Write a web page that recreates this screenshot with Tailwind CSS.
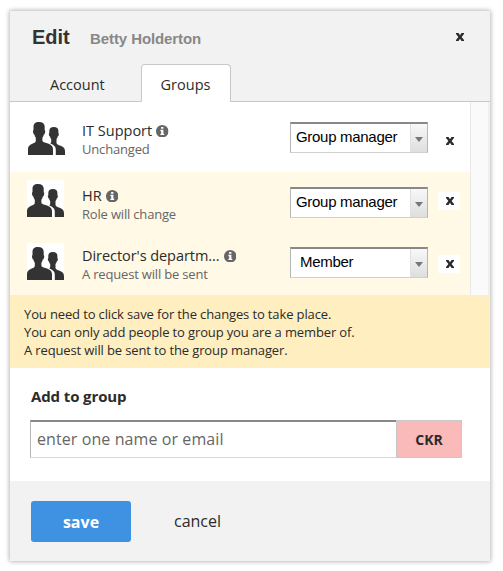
<!DOCTYPE html>
<html lang="en">
<head>
<meta charset="utf-8">
<title>Edit groups</title>
<script src="https://cdn.jsdelivr.net/npm/@tailwindcss/browser@4"></script>
</head>
<body class="bg-white w-[503px] h-[571px] overflow-hidden pl-[10px] pt-[11px] font-['Open_Sans',sans-serif] text-[#2b2b2b]">
<svg class="hidden">
  <symbol id="people" viewBox="0 0 37 37">
    <path fill="#333" d="M11 4C7.200 4 5.500 5.700 5.500 8.800v3.400c-.6.200-.7 1-.3 2.500.3 1.200.6 1.700 1.200 1.800.2 1.300.6 2.300 1.400 3.300v3c0 1.500-1.300 2-3 2.800C2 27 0 28 0 31.500V37h25v-5.500c0-3.500-2-4.500-5-5.900-1.700-.8-5.600-1.600-5.600-2.900v-2.900c.8-1 1.200-2 1.400-3.300.6-.1.900-.6 1.200-1.800.4-1.500.3-2.300-.3-2.500V8.800C16.700 5.700 14.800 4 11 4z"/>
    <path fill="#333" d="M25.800 9c-3 0-4.500 1.500-4.500 4v2.200c-.5.200-.6.800-.3 1.800.2 1 .5 1.400 1 1.500.2 1.100.6 2 1.200 2.600V24c0 .6-.4 1-1 1.400 3.600 1.500 5.600 2.800 5.600 6.100V37H37v-3.800c0-3-1.500-4.200-4.300-5.400-2.500-1-4.200-1.600-4.200-2.900v-3.800c.6-.6 1-1.500 1.200-2.600.5-.1.800-.5 1-1.500.3-1 .2-1.600-.3-1.800V13c0-2.500-1.600-4-4.600-4z"/>
  </symbol>
  <symbol id="info" viewBox="0 0 12 12">
    <circle cx="6" cy="6" r="6" fill="#666"/>
    <path fill="#fff" d="M4.900 1.800h2.200v1.700H4.900zM4.200 4.600h2.900v3.800h.8v1.300H4.200V8.400h.8V5.900h-.8z"/>
  </symbol>
  <symbol id="close" viewBox="0 0 8 8">
    <path fill="#2b2b2b" d="M0 0h2.500L4 2.200 5.500 0H8v1L5.600 4 8 7v1H5.500L4 5.800 2.500 8H0V7l2.400-3L0 1z"/>
  </symbol>
</svg>
<main class="w-[480px] h-[550px] flex flex-col bg-white rounded-[2px] shadow-[0_0_4px_1px_rgba(0,0,0,0.28)]">
  <header class="h-[91px] shrink-0 bg-[#f2f2f2] flex flex-col justify-between rounded-t-[2px]">
    <div class="h-[53px] flex pl-[22px] pr-[26px] pt-[14px] font-['Liberation_Sans',sans-serif] font-bold">
      <h1 class="w-[58px] text-[20px] leading-[24px] text-[#333]">Edit</h1>
      <span class="text-[15px] leading-[28px] text-[#888] grow whitespace-nowrap tracking-[-0.09px]">Betty Holderton</span>
      <button class="mt-[8px] size-[8px]" aria-label="Close"><svg class="size-[8px] block"><use href="#close"/></svg></button>
    </div>
    <nav class="h-[38px] flex text-[14.500px] leading-[20px]">
      <a class="w-[131px] pl-[40px] pt-[11px] border-b border-[#c8c8c8]">Account</a>
      <a class="w-[90px] pt-[10px] pr-px text-center border border-b-0 border-[#c8c8c8] rounded-t-[4px] bg-white">Groups</a>
      <span class="grow border-b border-[#c8c8c8]"></span>
    </nav>
  </header>
  <section class="h-[193px] shrink-0 flex">
    <ul class="w-[460px]">
      <li class="h-[70px] flex items-start">
        <svg class="ml-[18px] mt-[16px] size-[37px] shrink-0"><use href="#people"/></svg>
        <div class="ml-[17px] mt-[19px] w-[208px]">
          <div class="flex items-center h-[20px] gap-[4px] text-[14.500px] whitespace-nowrap">IT Support<svg class="size-[12.500px]"><use href="#info"/></svg></div>
          <p class="-mt-px text-[13px] leading-[18px] tracking-[-0.18px] text-[#666]">Unchanged</p>
        </div>
        <div class="mt-[20px] w-[138px] h-[31px] flex bg-white border-t-2 border-t-[#888] border-x border-x-[#b5b5b5] border-b border-b-[#d0d0d0] font-['Liberation_Sans',sans-serif] text-[15px] tracking-[-0.3px] text-black">
          <span class="grow pl-[5px] leading-[26px] whitespace-nowrap">Group manager</span>
          <span class="w-[17px] bg-linear-to-b from-[#f8f8f8] to-[#dedede] border-l border-[#e0e0e0] flex justify-center items-center"><svg class="w-[8px] h-[5px] mt-[2px]"><path d="M0 0h8L4 5z" fill="#777"/></svg></span>
        </div>
        <button class="ml-[11px] mt-[30px] w-[22px] h-[18px] flex items-center justify-center" aria-label="Remove"><svg class="size-[8px]"><use href="#close"/></svg></button>
      </li>
      <li class="h-[62px] flex items-start bg-[#fff9e5]">
        <svg class="ml-[17px] mt-[8px] size-[37px] shrink-0 bg-white"><use href="#people"/></svg>
        <div class="ml-[18px] mt-[14px] w-[208px]">
          <div class="flex items-center h-[20px] gap-[4px] text-[14.500px] whitespace-nowrap">HR<svg class="size-[12.500px]"><use href="#info"/></svg></div>
          <p class="-mt-px text-[13px] leading-[18px] tracking-[-0.18px] text-[#666]">Role will change</p>
        </div>
        <div class="mt-[15px] w-[138px] h-[31px] flex bg-white border-t-2 border-t-[#888] border-x border-x-[#b5b5b5] border-b border-b-[#d0d0d0] font-['Liberation_Sans',sans-serif] text-[15px] tracking-[-0.3px] text-black">
          <span class="grow pl-[5px] leading-[26px] whitespace-nowrap">Group manager</span>
          <span class="w-[17px] bg-linear-to-b from-[#f8f8f8] to-[#dedede] border-l border-[#e0e0e0] flex justify-center items-center"><svg class="w-[8px] h-[5px] mt-[2px]"><path d="M0 0h8L4 5z" fill="#777"/></svg></span>
        </div>
        <button class="ml-[10px] mt-[20px] w-[22px] h-[18px] pl-[2px] flex items-center justify-center bg-white" aria-label="Remove"><svg class="size-[8px]"><use href="#close"/></svg></button>
      </li>
      <li class="h-[61px] flex items-start bg-[#fff9e5]">
        <svg class="ml-[17px] mt-[9px] size-[37px] shrink-0 bg-white"><use href="#people"/></svg>
        <div class="ml-[18px] mt-[12px] w-[208px]">
          <div class="flex items-center h-[20px] gap-[4px] text-[14.500px] tracking-[-0.06px] whitespace-nowrap">Director's departm...<svg class="size-[12.500px]"><use href="#info"/></svg></div>
          <p class="-mt-px text-[13px] leading-[18px] tracking-[-0.18px] text-[#666]">A request will be sent</p>
        </div>
        <div class="mt-[13px] w-[138px] h-[31px] flex bg-white border-t-2 border-t-[#888] border-x border-x-[#b5b5b5] border-b border-b-[#d0d0d0] font-['Liberation_Sans',sans-serif] text-[15px] tracking-[-0.3px] text-black">
          <span class="grow pl-[9px] leading-[26px] whitespace-nowrap">Member</span>
          <span class="w-[17px] bg-linear-to-b from-[#f8f8f8] to-[#dedede] border-l border-[#e0e0e0] flex justify-center items-center"><svg class="w-[8px] h-[5px] mt-[2px]"><path d="M0 0h8L4 5z" fill="#777"/></svg></span>
        </div>
        <button class="ml-[10px] mt-[21px] w-[22px] h-[18px] pl-[2px] flex items-center justify-center bg-white" aria-label="Remove"><svg class="size-[8px]"><use href="#close"/></svg></button>
      </li>
    </ul>
    <div class="w-[20px] bg-[#fafafa] border-l border-r-2 border-l-[#e8e8e8] border-r-[#f0f0f0]"></div>
  </section>
  <section class="h-[73px] shrink-0 bg-[#feeec0] pl-[14px] pt-[10px] text-[13px] leading-[18px] tracking-[-0.13px] whitespace-nowrap">
    <p>You need to click save for the changes to take place.</p>
    <p>You can only add people to group you are a member of.</p>
    <p>A request will be sent to the group manager.</p>
  </section>
  <section class="h-[113px] shrink-0 pl-[20px] pt-[18px]">
    <h2 class="pl-[1px] h-[34px] text-[15px] leading-[20px] tracking-[-0.12px] font-bold">Add to group</h2>
    <div class="flex h-[38px]">
      <div class="w-[366px] pl-[6px] border-t-2 border-t-[#888] border-l border-l-[#b5b5b5] border-b border-b-[#d8d8d8] text-[16px] leading-[34px] tracking-[0.09px] text-[#666]">enter one name or email</div>
      <div class="w-[66px] bg-[#fbbaba] border border-[#c8c8c8] text-center text-[14px] leading-[38px] font-bold">CKR</div>
    </div>
  </section>
  <footer class="grow bg-[#f2f2f2] flex pl-[21px] pt-[20px] rounded-b-[2px]">
    <button class="w-[100px] h-[41px] rounded-[3px] bg-[#3f92e1] text-white text-[16px] font-bold leading-[42px]">save</button>
    <button class="ml-[43px] h-[41px] text-[16px] leading-[40px] flex items-start">cancel</button>
  </footer>
</main>
</body>
</html>
